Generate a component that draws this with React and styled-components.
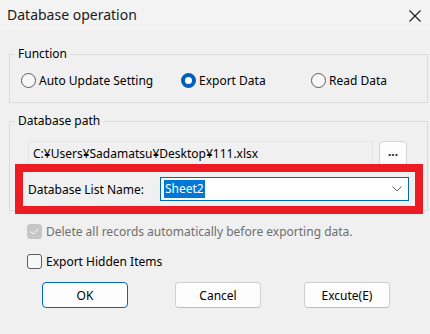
import React from "react";
import styled, { createGlobalStyle } from "styled-components";

const GlobalStyle = createGlobalStyle`
  html, body {
    margin: 0;
    padding: 0;
    background: #f0f0f0;
  }
  body {
    font-family: "Noto Sans", "Open Sans", sans-serif;
    font-size: 12px;
    color: #000;
  }
`;

const Dialog = styled.div`
  width: 430px;
  height: 334px;
  background: #f0f0f0;
  overflow: hidden;
`;

const TitleBar = styled.div`
  height: 31px;
  background: #f3f3f3;
  display: flex;
  align-items: center;
  justify-content: space-between;
  padding: 0 9px 2px 7px;
  box-sizing: border-box;
`;

const Title = styled.span`
  font-size: 14px;
  color: #1a1a1a;
`;

const CloseButton = styled.span`
  display: flex;
  width: 12px;
  height: 12px;
  margin-top: 2px;
`;

const Content = styled.div`
  padding: 0 2px 0 9px;
`;

const GroupBox = styled.fieldset`
  margin: ${(p) => p.$top}px 0 0 0;
  padding: ${(p) => p.$pad};
  border: 1px solid #dcdcdc;
  min-width: 0;
  position: relative;
`;

const Legend = styled.legend`
  padding: 0 3px;
  line-height: 16px;
  font-size: 12px;
`;

const RadioRow = styled.div`
  display: grid;
  grid-template-columns: 160px 130px auto;
  height: 20px;
  align-items: center;
  margin-left: 6px;
`;

const Option = styled.label`
  display: flex;
  align-items: center;
  gap: 3px;
  white-space: nowrap;
`;

const RadioMark = styled.span`
  width: 15px;
  height: 15px;
  box-sizing: border-box;
  border-radius: 50%;
  flex-shrink: 0;
  border: ${(p) => (p.$checked ? "4.5px solid #005fb8" : "1px solid #5d5d5d")};
  background: ${(p) => (p.$checked ? "#fff" : "#f7f7f7")};
`;

const PathRow = styled.div`
  display: flex;
  gap: 6px;
  margin-left: 13px;
  height: 24px;
`;

const PathField = styled.div`
  width: 345px;
  box-sizing: border-box;
  border: 1px solid #e4e4e4;
  border-bottom-color: #f0f0f0;
  background: #f0f0f0;
  padding: 0 0 0 4px;
  display: flex;
  align-items: center;
  white-space: nowrap;
`;

const BrowseButton = styled.button`
  width: 28px;
  height: 26px;
  box-sizing: border-box;
  border: 1px solid #d3d3d3;
  border-radius: 4px;
  background: #fdfdfd;
  font-family: inherit;
  font-size: 12px;
  font-weight: 700;
  color: #1a1a1a;
  padding: 0 0 4px;
  line-height: 1;
`;

const ListRow = styled.div`
  margin: 7px 0 0 8px;
  width: 392px;
  height: 34px;
  box-sizing: border-box;
  padding: 0 0 0 5px;
  display: flex;
  align-items: center;
  outline: 8px solid #ed1c24;
  position: relative;
  z-index: 1;
  background: #f0f0f0;
`;

const ListLabel = styled.span`
  width: 132px;
  flex-shrink: 0;
  white-space: nowrap;
`;

const Combo = styled.div`
  width: 249px;
  height: 24px;
  box-sizing: border-box;
  border: 1px solid #0067c0;
  background: #fff;
  display: flex;
  align-items: center;
  justify-content: space-between;
  padding: 0 6px 0 3px;
`;

const Selected = styled.span`
  background: #0078d7;
  color: #fff;
  line-height: 18px;
  padding: 0 1px;
`;

const CheckRow = styled.label`
  display: flex;
  align-items: center;
  gap: 4px;
  height: 16px;
  margin: ${(p) => p.$top}px 0 0 18px;
  color: ${(p) => (p.$disabled ? "#6e6e6e" : "#000")};
  white-space: nowrap;
`;

const CheckMark = styled.span`
  width: 15px;
  height: 15px;
  box-sizing: border-box;
  border-radius: 3px;
  flex-shrink: 0;
  display: flex;
  align-items: center;
  justify-content: center;
  border: 1px solid ${(p) => (p.$disabled ? "#c6c6c6" : "#5d5d5d")};
  background: ${(p) => (p.$disabled ? "#c6c6c6" : "#f7f7f7")};
`;

const ButtonRow = styled.div`
  display: grid;
  grid-template-columns: 133px 129px 86px;
  margin: 13px 0 0 33px;
`;

const Button = styled.button`
  width: 86px;
  height: 26px;
  box-sizing: border-box;
  border-radius: 4px;
  border: 1px solid ${(p) => (p.$primary ? "#0067c0" : "#d0d0d0")};
  border-bottom-color: ${(p) => (p.$primary ? "#0067c0" : "#bdbdbd")};
  background: #fdfdfd;
  font-family: inherit;
  font-size: 12px;
  color: #000;
  padding: 0;
`;

function Radio({ checked, children }) {
  return (
    <Option>
      <RadioMark $checked={checked} />
      {children}
    </Option>
  );
}

export default function App() {
  return (
    <Dialog>
      <GlobalStyle />
      <TitleBar>
        <Title>Database operation</Title>
        <CloseButton>
          <svg width="12" height="12" viewBox="0 0 12 12">
            <path d="M0.5 0.5 L11.5 11.5 M11.5 0.5 L0.5 11.5" stroke="#1a1a1a" strokeWidth="1.1" fill="none" />
          </svg>
        </CloseButton>
      </TitleBar>
      <Content>
        <GroupBox $top={15} $pad="8px 0 12px 5px">
          <Legend>Function</Legend>
          <RadioRow>
            <Radio>Auto Update Setting</Radio>
            <Radio checked>Export Data</Radio>
            <Radio>Read Data</Radio>
          </RadioRow>
        </GroupBox>
        <GroupBox $top={10} $pad="12px 0 4px 5px">
          <Legend>Database path</Legend>
          <PathRow>
            <PathField>C:¥Users¥Sadamatsu¥Desktop¥111.xlsx</PathField>
            <BrowseButton>...</BrowseButton>
          </PathRow>
          <ListRow>
            <ListLabel>Database List Name:</ListLabel>
            <Combo>
              <Selected>Sheet2</Selected>
              <svg width="10" height="6" viewBox="0 0 10 6">
                <path d="M0.5 0.5 L5 5 L9.5 0.5" stroke="#606060" strokeWidth="1" fill="none" />
              </svg>
            </Combo>
          </ListRow>
        </GroupBox>
        <CheckRow $top={12} $disabled>
          <CheckMark $disabled>
            <svg width="9" height="7" viewBox="0 0 9 7">
              <path d="M0.5 3.5 L3.2 6 L8.5 0.7" stroke="#fff" strokeWidth="1" fill="none" />
            </svg>
          </CheckMark>
          Delete all records automatically before exporting data.
        </CheckRow>
        <CheckRow $top={14}>
          <CheckMark />
          Export Hidden Items
        </CheckRow>
        <ButtonRow>
          <Button $primary>OK</Button>
          <Button>Cancel</Button>
          <Button>Excute(E)</Button>
        </ButtonRow>
      </Content>
    </Dialog>
  );
}
